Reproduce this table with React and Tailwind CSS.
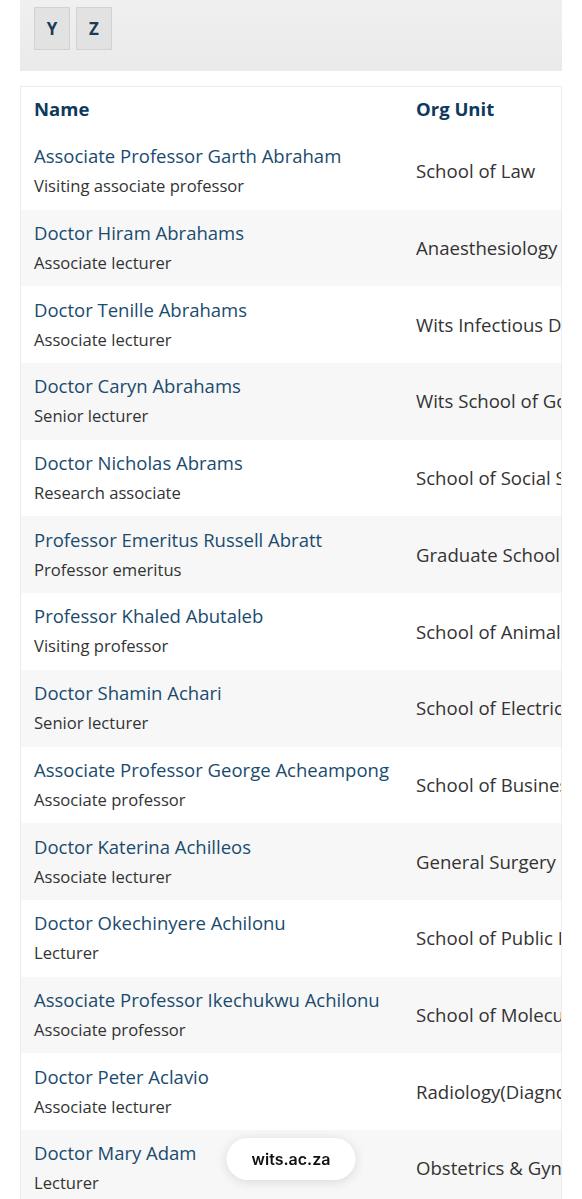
import React from "react";

const rows = [
  ["Associate Professor Garth Abraham", "Visiting associate professor", "School of Law"],
  ["Doctor Hiram Abrahams", "Associate lecturer", "Anaesthesiology"],
  ["Doctor Tenille Abrahams", "Associate lecturer", "Wits Infectious Diseases"],
  ["Doctor Caryn Abrahams", "Senior lecturer", "Wits School of Governance"],
  ["Doctor Nicholas Abrams", "Research associate", "School of Social Sciences"],
  ["Professor Emeritus Russell Abratt", "Professor emeritus", "Graduate School of Business"],
  ["Professor Khaled Abutaleb", "Visiting professor", "School of Animal Sciences"],
  ["Doctor Shamin Achari", "Senior lecturer", "School of Electrical Engineering"],
  ["Associate Professor George Acheampong", "Associate professor", "School of Business Sciences"],
  ["Doctor Katerina Achilleos", "Associate lecturer", "General Surgery Department"],
  ["Doctor Okechinyere Achilonu", "Lecturer", "School of Public Health"],
  ["Associate Professor Ikechukwu Achilonu", "Associate professor", "School of Molecular Sciences"],
  ["Doctor Peter Aclavio", "Associate lecturer", "Radiology(Diagnostic)"],
  ["Doctor Mary Adam", "Lecturer", "Obstetrics & Gynaecology"],
];

export default function App() {
  return (
    <div className="min-h-[1199px] bg-white pb-10" style={{ fontFamily: '"Open Sans", sans-serif' }}>
      <div className="mx-5 h-[71px] bg-gradient-to-b from-[#f0f0f0] to-[#eaeaea] pl-[14px] pt-[7px] flex gap-[6px] items-start">
        {["Y", "Z"].map((l) => (
          <div
            key={l}
            className="w-[36px] h-[43px] flex items-center justify-center bg-[#e2e2e2] border border-[#d2d2d2] text-[#1c3a55] font-bold text-[17px]"
          >
            {l}
          </div>
        ))}
      </div>
      <div className="mx-5 mt-[15px] border border-[#ececec] overflow-hidden">
        <table className="border-collapse table-fixed w-[740px]">
          <colgroup>
            <col className="w-[382px]" />
            <col className="w-[358px]" />
          </colgroup>
          <thead>
            <tr className="h-[46px]">
              <th className="text-left pl-[13px] pb-[3px] font-bold text-[18.5px] text-[#0d3a5c] align-middle">Name</th>
              <th className="text-left pl-[13px] pb-[3px] font-bold text-[18.5px] text-[#0d3a5c] align-middle">Org Unit</th>
            </tr>
          </thead>
          <tbody>
            {rows.map((r, i) => (
              <tr key={i} className={`h-[76.7px] ${i % 2 === 1 ? "bg-[#f7f7f7]" : "bg-white"}`}>
                <td className="pl-[13px] align-middle whitespace-nowrap">
                  <div className="text-[18.5px] leading-[30px] text-[#1a4b6e]">{r[0]}</div>
                  <div className="text-[16.6px] leading-[30px] text-[#333]">{r[1]}</div>
                </td>
                <td className="pl-[13px] align-middle whitespace-nowrap text-[18.6px] text-[#333]">{r[2]}</td>
              </tr>
            ))}
          </tbody>
        </table>
      </div>
      <div className="fixed left-1/2 -translate-x-1/2 bottom-[19px] h-[42px] px-[25px] rounded-full bg-white shadow-[0_2px_12px_rgba(0,0,0,0.12)] flex items-center text-[16px] font-semibold text-[#111]" style={{ fontFamily: "Inter, sans-serif" }}>
        wits.ac.za
      </div>
    </div>
  );
}
